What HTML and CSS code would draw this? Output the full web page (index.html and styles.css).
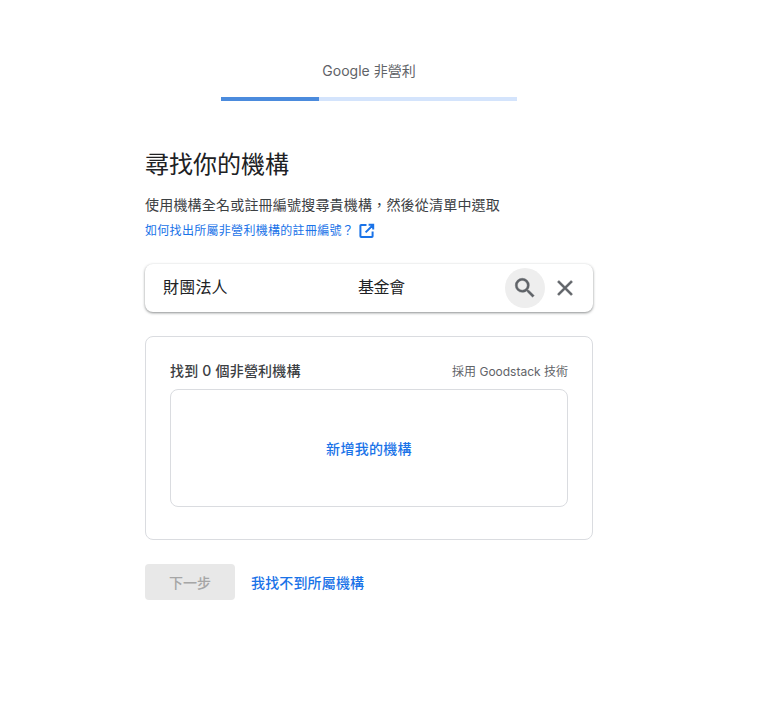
FILE: index.html
```html
<!DOCTYPE html>
<html lang="zh-Hant">
<head>
<meta charset="utf-8">
<title>Google 非營利</title>
<link rel="stylesheet" href="styles.css">
</head>
<body>
<main class="page">
  <header class="head">
    <div class="brand">Google 非營利</div>
    <div class="progress"><div class="progress-fill"></div></div>
  </header>
  <h1 class="title">尋找你的機構</h1>
  <p class="desc">使用機構全名或註冊編號搜尋貴機構，然後從清單中選取</p>
  <a class="help" href="#"><span>如何找出所屬非營利機構的註冊編號？</span>
    <svg class="ext" viewBox="0 0 16 16" width="16" height="16"><path d="M7.5 2H2.2a.8.8 0 0 0-.8.8v10.4c0 .44.36.8.8.8h10.6a.8.8 0 0 0 .8-.8V8.6M9.6 1.8h4.6v4.6M14 2 6.6 9.4" fill="none" stroke="#1a73e8" stroke-width="2"/></svg>
  </a>
  <div class="search">
    <span class="q1">財團法人</span>
    <span class="q2">基金會</span>
    <span class="search-btn">
      <svg class="glyph" viewBox="0 0 24 24" width="26" height="26"><path d="M15.5 14h-.79l-.28-.27A6.47 6.47 0 0 0 16 9.5 6.5 6.5 0 1 0 9.5 16c1.61 0 3.09-.59 4.23-1.57l.27.28v.79l5 4.99L20.49 19l-4.99-5zm-6 0C7.01 14 5 11.99 5 9.5S7.01 5 9.5 5 14 7.01 14 9.5 11.99 14 9.5 14z"/></svg>
    </span>
    <svg class="close glyph" viewBox="0 0 24 24" width="26" height="26"><path d="M19 6.41 17.59 5 12 10.59 6.41 5 5 6.41 10.59 12 5 17.59 6.41 19 12 13.41 17.59 19 19 17.59 13.41 12z"/></svg>
  </div>
  <section class="card">
    <div class="card-head">
      <span class="count">找到 0 個非營利機構</span>
      <span class="powered">採用 Goodstack 技術</span>
    </div>
    <div class="empty"><a class="add" href="#">新增我的機構</a></div>
  </section>
  <div class="actions">
    <button class="next" disabled>下一步</button>
    <a class="notfound" href="#">我找不到所屬機構</a>
  </div>
</main>
</body>
</html>
```
FILE: styles.css
```css
* { box-sizing: border-box; }
html, body { margin: 0; background: #fff; }
body {
  font-family: "Inter", "Noto Sans CJK TC", sans-serif;
  color: #202124;
  height: 701px;
  overflow: hidden;
}
a { text-decoration: none; color: #1a73e8; }
.page { width: 448px; margin-left: 145px; padding-top: 61px; }
.head { display: flex; flex-direction: column; align-items: center; }
.brand { font-size: 14px; line-height: 20px; color: #5f6368; height: 36px; }
.progress { width: 296px; height: 4px; background: #d2e3fc; opacity: .95; }
.progress-fill { width: 98px; height: 4px; background: #4285dc; }
.title { font-size: 24px; font-weight: 400; line-height: 32px; margin: 48px 0 0; }
.desc { font-size: 14px; letter-spacing: .2px; line-height: 20px; margin: 14px 0 0; color: #3c4043; }
.help { display: flex; align-items: center; gap: 5px; margin-top: 6px; font-size: 12px; line-height: 20px; letter-spacing: .3px; height: 20px; }
.search {
  display: flex; align-items: center; height: 48px; margin-top: 23px;
  padding: 0 15px 0 18px; border-radius: 8px; background: #fff;
  box-shadow: 0 1px 3px rgba(60,64,67,.45), 0 1px 2px rgba(60,64,67,.2);
  font-size: 16px; line-height: 20px;
}
.q1 { width: 65px; letter-spacing: .2px; margin-bottom: 3px; }
.q2 { margin-left: 130px; letter-spacing: -.5px; margin-bottom: 3px; }
.search-btn {
  width: 40px; height: 40px; border-radius: 50%; background: #eeeeee;
  display: flex; align-items: center; justify-content: center; margin-left: auto;
}
.glyph { fill: #5f6368; stroke: #5f6368; stroke-width: .4; }
.close { margin-left: 7px; }
.card { margin-top: 24px; height: 204px; border: 1px solid #dadce0; border-radius: 8px; padding: 24px 24px 0; }
.card-head { display: flex; justify-content: space-between; align-items: center; height: 20px; margin-top: -1px; margin-bottom: 9px; }
.count { font-size: 14px; font-weight: 500; color: #3c4043; letter-spacing: .2px; }
.powered { font-size: 12px; color: #5f6368; }
.empty {
  display: flex; align-items: center; justify-content: center;
  height: 118px; border: 1px solid #dadce0; border-radius: 8px;
}
.add { font-size: 14px; font-weight: 500; letter-spacing: .3px; }
.actions { display: flex; align-items: center; gap: 16px; margin-top: 24px; }
.next {
  width: 90px; height: 36px; border: 0; border-radius: 4px; background: #e8e8e8;
  color: #a6a6a6; font: 500 14px "Inter", "Noto Sans CJK TC", sans-serif;
}
.notfound { font-size: 14px; font-weight: 500; letter-spacing: .15px; }
```
